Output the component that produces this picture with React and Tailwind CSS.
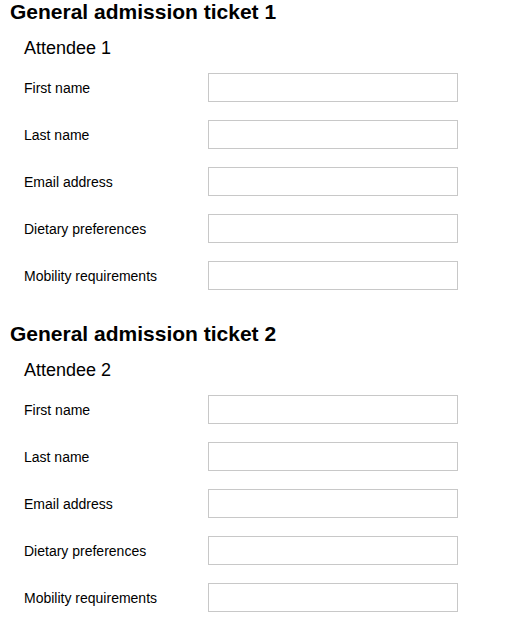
import React from 'react';

const FIELDS = ['First name', 'Last name', 'Email address', 'Dietary preferences', 'Mobility requirements'];

const TicketSection = ({ number }) => (
  <section className="flex flex-col">
    <h2 className="pl-[10px] text-[21px] leading-[24px] font-bold text-black">
      General admission ticket {number}
    </h2>
    <h3 className="mt-[14px] pl-[24px] text-[18px] leading-[21px] text-black">Attendee {number}</h3>
    <div className="mt-[14px] flex flex-col gap-[18px]">
      {FIELDS.map((label) => (
        <div key={label} className="flex items-center">
          <label className="w-[208px] pl-[24px] text-[14px] leading-[16px] text-black">{label}</label>
          <input
            type="text"
            className="h-[29px] w-[250px] border border-[#c8c8c8] bg-white outline-none"
          />
        </div>
      ))}
    </div>
  </section>
);

const App = () => {
  return (
    <div className="min-h-[642px] bg-white font-['Liberation_Sans',Arial,sans-serif]">
      <div className="flex flex-col gap-[32px]">
        <TicketSection number={1} />
        <TicketSection number={2} />
      </div>
    </div>
  );
};

export default App;
